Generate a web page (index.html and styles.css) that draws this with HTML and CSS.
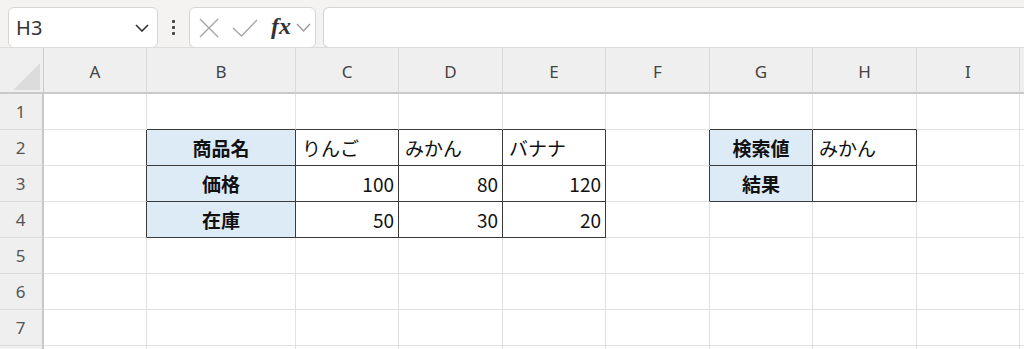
FILE: index.html
```html
<!DOCTYPE html>
<html lang="ja">
<head>
<meta charset="utf-8">
<link rel="stylesheet" href="styles.css">
</head>
<body>
<div class="app">
  <div class="toolbar">
    <div class="namebox">
      <span class="ref">H3</span>
      <svg class="chev" width="14" height="8" viewBox="0 0 14 8"><path d="M1 1 L7 7 L13 1" fill="none" stroke="#333" stroke-width="1.6"/></svg>
    </div>
    <div class="dots"><i></i><i></i><i></i></div>
    <div class="fxgroup">
      <svg class="ico" width="20" height="20" viewBox="0 0 20 20"><path d="M1 1 L19 19 M19 1 L1 19" stroke="#a6a6a6" stroke-width="1.4" fill="none"/></svg>
      <svg class="ico" width="26" height="18" viewBox="0 0 26 18"><path d="M1 9 L9.5 17 L25 1" stroke="#a6a6a6" stroke-width="1.4" fill="none"/></svg>
      <span class="fx">fx</span>
      <svg class="ico small" width="15" height="9" viewBox="0 0 15 9"><path d="M1 1 L7.5 8 L14 1" stroke="#9a9a9a" stroke-width="1.3" fill="none"/></svg>
    </div>
    <div class="formula"></div>
  </div>

  <div class="sheet">
    <div class="corner"><span class="tri"></span></div>
    <div class="ch">A</div><div class="ch">B</div><div class="ch">C</div><div class="ch">D</div><div class="ch">E</div><div class="ch">F</div><div class="ch">G</div><div class="ch">H</div><div class="ch">I</div><div class="ch end"></div>

    <div class="rh">1</div>
    <div class="c"></div><div class="c bb"></div><div class="c bb"></div><div class="c bb"></div><div class="c bb"></div><div class="c"></div><div class="c bb"></div><div class="c bb"></div><div class="c"></div><div class="c end"></div>

    <div class="rh">2</div>
    <div class="c br"></div><div class="c t hd">商品名</div><div class="c t">りんご</div><div class="c t">みかん</div><div class="c t">バナナ</div><div class="c br"></div><div class="c t hd">検索値</div><div class="c t">みかん</div><div class="c"></div><div class="c end"></div>

    <div class="rh">3</div>
    <div class="c br"></div><div class="c t hd">価格</div><div class="c t num">100</div><div class="c t num">80</div><div class="c t num">120</div><div class="c br"></div><div class="c t hd">結果</div><div class="c t"></div><div class="c"></div><div class="c end"></div>

    <div class="rh">4</div>
    <div class="c br"></div><div class="c t hd">在庫</div><div class="c t num">50</div><div class="c t num">30</div><div class="c t num">20</div><div class="c"></div><div class="c"></div><div class="c"></div><div class="c"></div><div class="c end"></div>

    <div class="rh">5</div>
    <div class="c"></div><div class="c"></div><div class="c"></div><div class="c"></div><div class="c"></div><div class="c"></div><div class="c"></div><div class="c"></div><div class="c"></div><div class="c end"></div>

    <div class="rh">6</div>
    <div class="c"></div><div class="c"></div><div class="c"></div><div class="c"></div><div class="c"></div><div class="c"></div><div class="c"></div><div class="c"></div><div class="c"></div><div class="c end"></div>

    <div class="rh">7</div>
    <div class="c"></div><div class="c"></div><div class="c"></div><div class="c"></div><div class="c"></div><div class="c"></div><div class="c"></div><div class="c"></div><div class="c"></div><div class="c end"></div>

    <div class="rh last"></div>
    <div class="c last"></div><div class="c last"></div><div class="c last"></div><div class="c last"></div><div class="c last"></div><div class="c last"></div><div class="c last"></div><div class="c last"></div><div class="c last"></div><div class="c last end"></div>
  </div>
</div>
</body>
</html>
```

FILE: styles.css
```css
* { box-sizing: border-box; }
html, body { margin: 0; padding: 0; }
body {
  width: 1024px;
  height: 349px;
  overflow: hidden;
  background: #f4f3f2;
  font-family: "Noto Sans", "Noto Sans CJK JP", sans-serif;
}
.app { display: flex; flex-direction: column; }

.toolbar {
  height: 47px;
  display: flex;
  align-items: flex-start;
  padding: 7px 0 0 8px;
  background: #f4f3f2;
}
.namebox {
  width: 150px;
  height: 41px;
  background: #fff;
  border: 1px solid #d6d5d4;
  border-radius: 6px;
  display: flex;
  align-items: center;
  justify-content: space-between;
  padding: 0 8px 0 7px;
}
.ref {
  font-family: "Noto Sans", sans-serif;
  font-size: 20px;
  color: #333;
  letter-spacing: 0.3px;
}
.chev { margin-top: 1px; }
.dots {
  width: 31px;
  height: 41px;
  display: flex;
  flex-direction: column;
  align-items: center;
  justify-content: center;
  gap: 3px;
}
.dots i {
  display: block;
  width: 3px;
  height: 3px;
  background: #444;
  border-radius: 1px;
}
.fxgroup {
  width: 127px;
  height: 41px;
  background: #fff;
  border: 1px solid #d6d5d4;
  border-radius: 6px;
  display: flex;
  align-items: center;
  padding: 0 0 0 9px;
}
.fxgroup .ico { display: block; }
.fxgroup .ico:nth-child(2) { margin-left: 13px; }
.fx {
  font-family: "Liberation Serif", serif;
  font-style: italic;
  font-weight: bold;
  font-size: 24px;
  color: #333;
  margin-left: 13px;
  line-height: 1;
  margin-top: -3px;
}
.fxgroup .small { margin-left: 5px; }
.formula {
  margin-left: 7px;
  flex: 1;
  height: 41px;
  background: #fff;
  border: 1px solid #d6d5d4;
  border-right: none;
  border-radius: 6px 0 0 6px;
}

.sheet {
  display: grid;
  grid-template-columns: 44px 103px 149px 103px 104px 103px 104px 103px 104px 103px 1fr;
  grid-template-rows: 46px repeat(7, 36px) 3px;
  background: #fff;
  border-top: 1px solid #dddcdc;
}
.corner {
  background: #efefef;
  border-right: 1px solid #c9c9c9;
  border-bottom: 2px solid #c9c9c9;
  position: relative;
}
.tri {
  position: absolute;
  left: 13px;
  top: 15px;
  width: 0;
  height: 0;
  border-style: solid;
  border-width: 0 0 27px 27px;
  border-color: transparent transparent #dcdcdc transparent;
}
.ch {
  background: #efefef;
  border-right: 1px solid #dadada;
  border-bottom: 2px solid #c9c9c9;
  display: flex;
  align-items: center;
  justify-content: center;
  font-family: "Noto Sans", sans-serif;
  font-size: 17px;
  color: #444;
  padding-top: 2px;
}
.ch.end { border-right: none; }
.rh {
  background: #efefef;
  border-right: 2px solid #c9c9c9;
  border-bottom: 1px solid #dadada;
  display: flex;
  align-items: center;
  justify-content: center;
  font-family: "Noto Sans", sans-serif;
  font-size: 17px;
  color: #555;
  padding-right: 1px;
}
.rh.last { border-bottom: none; }
.c {
  border-right: 1px solid #e1e1e1;
  border-bottom: 1px solid #e1e1e1;
  display: flex;
  align-items: center;
  font-family: "Noto Sans CJK JP", sans-serif;
  font-size: 19px;
  color: #111;
  padding: 0 4px;
  line-height: 1;
  white-space: nowrap;
}
.c.last { border-bottom: none; }
.c.end { border-right: none; }
.c.br { border-right-color: #3a3a3a; }
.c.bb { border-bottom-color: #3a3a3a; }
.c.t {
  border-right-color: #3a3a3a;
  border-bottom-color: #3a3a3a;
  padding-left: 6px;
}
.c.hd {
  background: #ddebf7;
  font-weight: bold;
  justify-content: center;
  padding-left: 4px;
}
.c.num { justify-content: flex-end; padding-right: 4px; }
```
